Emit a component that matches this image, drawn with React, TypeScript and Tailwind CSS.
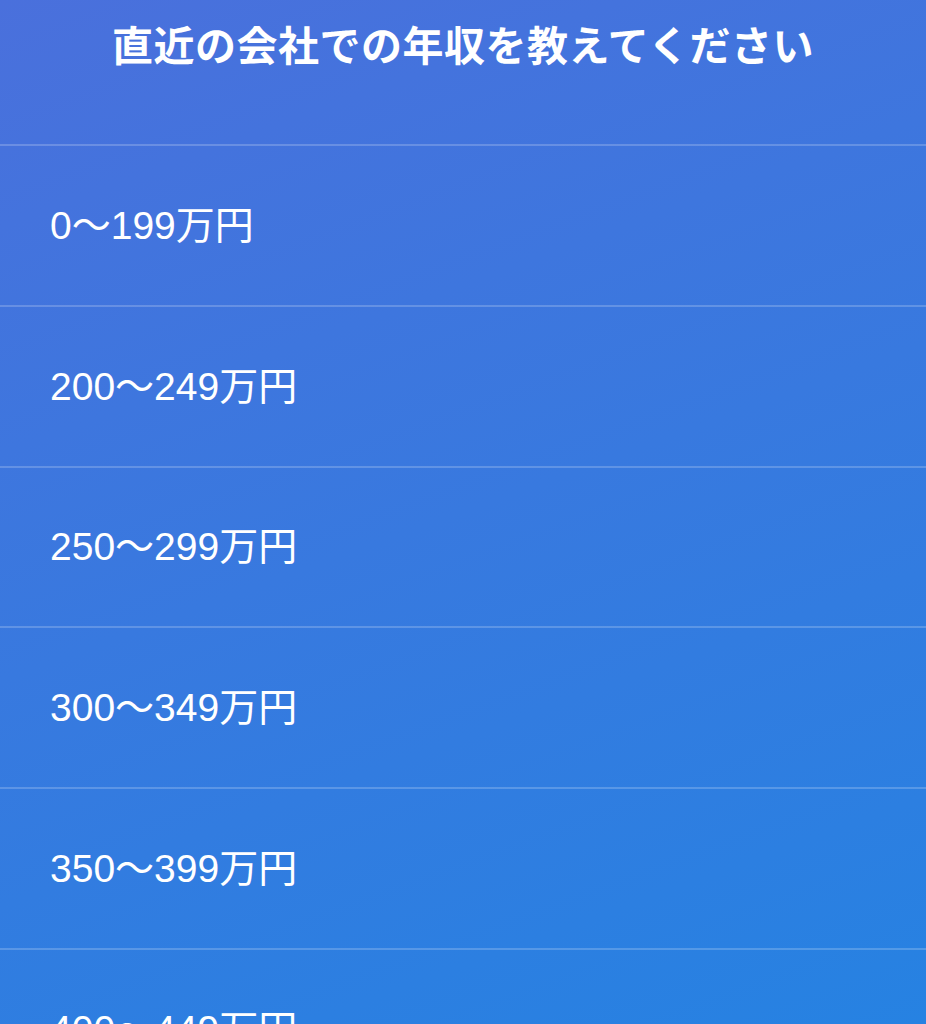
import React from 'react';

const ranges = [
  '0〜199万円',
  '200〜249万円',
  '250〜299万円',
  '300〜349万円',
  '350〜399万円',
  '400〜449万円',
  '450〜499万円',
];

export default function App() {
  return (
    <div
      className="h-[1024px] w-full overflow-hidden bg-linear-[160deg] from-[#4a70dc] to-[#2682e2] text-white"
      style={{ fontFamily: '"Liberation Sans", "Noto Sans CJK JP", sans-serif' }}
    >
      {/* Question header */}
      <div className="flex h-[144px] justify-center pt-[22px]">
        <h1 className="text-[41px] font-bold leading-[50px] tracking-[0.5px]">
          直近の会社での年収を教えてください
        </h1>
      </div>

      {/* Answer list */}
      <ul>
        {ranges.map((r) => (
          <li
            key={r}
            className="flex h-[160.75px] items-center border-t-2 border-white/20 pl-[50px] text-[39px] leading-none"
          >
            {r}
          </li>
        ))}
      </ul>
    </div>
  );
}
